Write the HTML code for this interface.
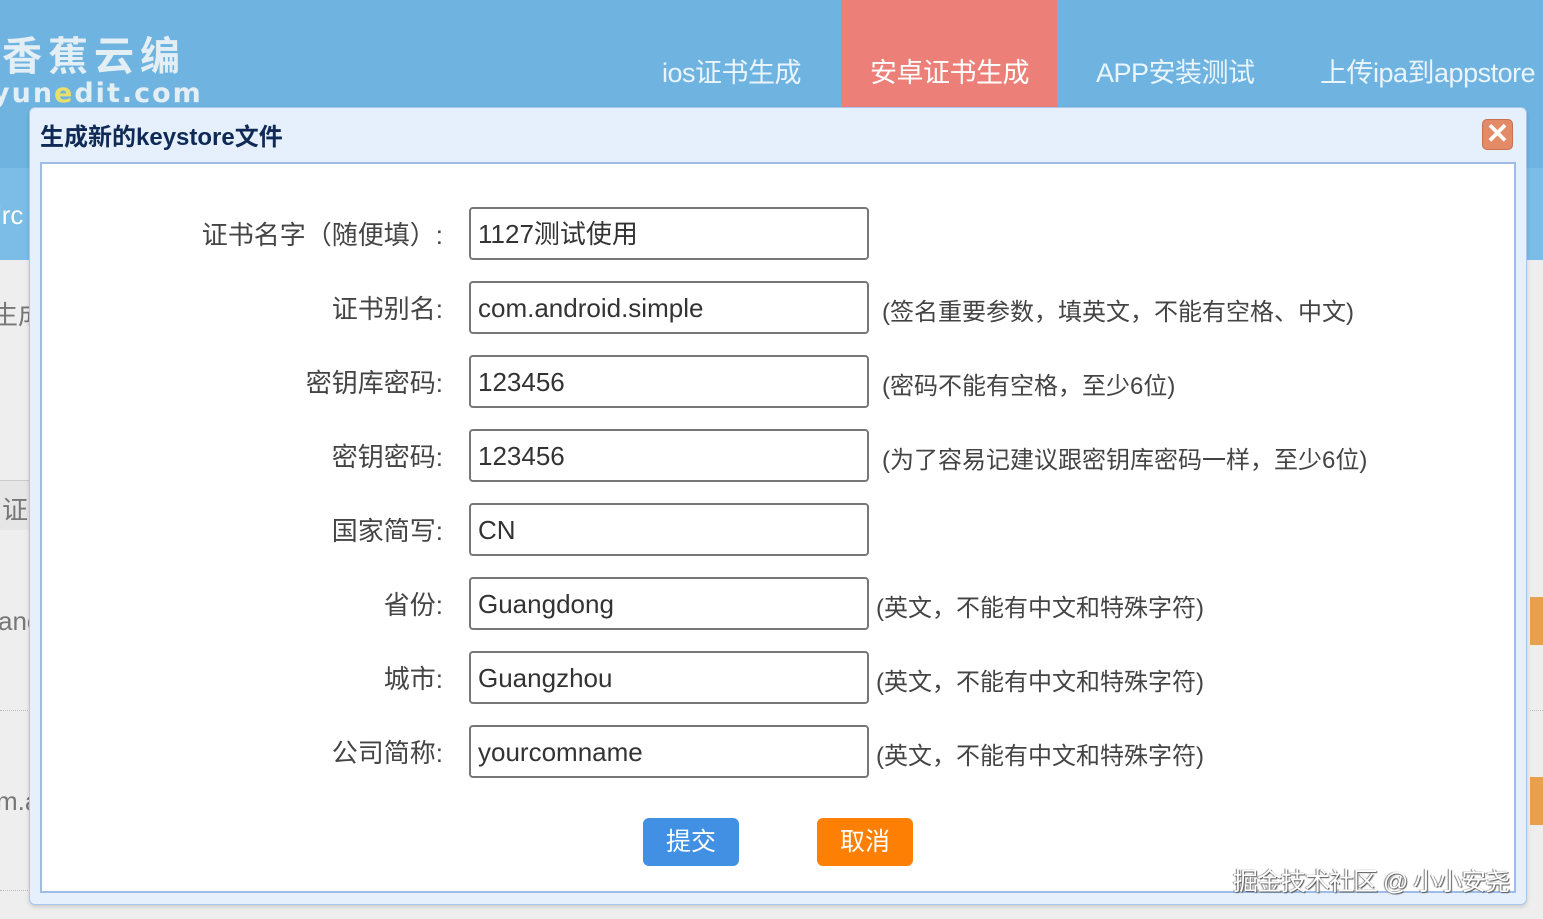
<!DOCTYPE html>
<html><head><meta charset="utf-8"><style>
*{margin:0;padding:0;box-sizing:border-box}
body{width:1543px;height:919px;overflow:hidden;position:relative;background:#eeeeee;font-family:"Liberation Sans","Noto Sans CJK SC",sans-serif;}
.hdr{position:absolute;left:0;top:0;width:1543px;height:168px;background:#6fb4e1}
.bar2{position:absolute;left:0;top:168px;width:1543px;height:92px;background:#7bbde7}
.nav{position:absolute;top:51px;font-size:27px;color:#eaf4fb;letter-spacing:-0.5px}
.act{position:absolute;left:841px;top:0;width:216px;height:107px;background:#ec8078}
.logo1{position:absolute;left:2px;top:24px;font-size:40px;color:#e4eef5;font-weight:bold;letter-spacing:6px}
.logo2{position:absolute;left:-8px;top:78px;font-size:27px;color:#e4eef5;letter-spacing:2px;font-family:"DejaVu Sans",sans-serif;font-weight:bold}
.dlg{position:absolute;left:29px;top:107px;width:1498px;height:798px;background:#e6effc;border:1px solid #a9c7ec;border-radius:6px;box-shadow:0 2px 4px rgba(0,0,0,.15)}
.title{position:absolute;left:40px;top:117px;font-size:24px;font-weight:bold;color:#0f2a55}
.close{position:absolute;left:1482px;top:119px;width:31px;height:31px;background:#e38a66;border-radius:5px;border:1px solid #c9714f;color:#fff;font-size:28px;line-height:28px;text-align:center;font-weight:bold}
.body{position:absolute;left:40px;top:162px;width:1476px;height:731px;background:#fff;border:2px solid #9dbde8}
.lbl{position:absolute;right:1100px;font-size:26px;color:#444;white-space:nowrap}
.inp{position:absolute;left:469px;width:400px;height:53px;border:2px solid #777;border-radius:4px;font-size:26px;color:#333;padding-left:7px;line-height:51px}
.hint{position:absolute;font-size:24px;color:#444;white-space:nowrap}
.btn{position:absolute;top:818px;width:96px;height:48px;border-radius:6px;color:#fff;font-size:25px;text-align:center;line-height:48px}
.wm{position:absolute;left:1233px;top:862px;font-size:25px;color:#fff;text-shadow:1px 1px 1px #555,-1px 0 1px #777;letter-spacing:-1px}
.side{position:absolute;left:0;font-size:26px;color:#777}
</style></head><body>
<div class="hdr"></div>
<div class="bar2"></div>
<div class="act"></div>
<div class="logo1">香蕉云编</div>
<div class="logo2">yun<span style="color:#e8e06a">e</span>dit.com</div>
<div class="nav" style="left:662px">ios证书生成</div>
<div class="nav" style="left:870px;color:#fff">安卓证书生成</div>
<div class="nav" style="left:1096px">APP安装测试</div>
<div class="nav" style="left:1320px">上传ipa到appstore</div>
<div class="side" style="top:200px;color:#fff;left:-4px">lrc</div>
<div class="side" style="top:295px;left:-8px">生成</div>
<div style="position:absolute;left:0;top:480px;width:40px;height:50px;background:#e6e6e6;border-top:1px solid #ccc"></div>
<div class="side" style="top:490px;left:2px">证</div>
<div class="side" style="top:606px;left:-2px">anc</div>
<div class="side" style="top:786px;left:-4px">m.a</div>
<div style="position:absolute;left:0;top:710px;width:30px;border-top:1px dotted #bbb"></div>
<div style="position:absolute;left:0;top:890px;width:30px;border-top:1px dotted #bbb"></div>
<div style="position:absolute;left:1530px;top:597px;width:13px;height:48px;background:#e9a04e"></div>
<div style="position:absolute;left:1530px;top:777px;width:13px;height:48px;background:#e9a04e"></div>
<div style="position:absolute;left:1530px;top:710px;width:13px;border-top:1px dotted #bbb"></div>
<div class="dlg"></div>
<div class="title">生成新的keystore文件</div>
<div class="close">✕</div>
<div class="body"></div>

<div class="lbl" style="top:215px">证书名字（随便填）:</div>
<div class="inp" style="top:207px">1127测试使用</div>
<div class="lbl" style="top:289px">证书别名:</div>
<div class="inp" style="top:281px">com.android.simple</div>
<div class="hint" style="left:882px;top:292px">(签名重要参数，填英文，不能有空格、中文)</div>
<div class="lbl" style="top:363px">密钥库密码:</div>
<div class="inp" style="top:355px">123456</div>
<div class="hint" style="left:882px;top:366px">(密码不能有空格，至少6位)</div>
<div class="lbl" style="top:437px">密钥密码:</div>
<div class="inp" style="top:429px">123456</div>
<div class="hint" style="left:882px;top:440px">(为了容易记建议跟密钥库密码一样，至少6位)</div>
<div class="lbl" style="top:511px">国家简写:</div>
<div class="inp" style="top:503px">CN</div>
<div class="lbl" style="top:585px">省份:</div>
<div class="inp" style="top:577px">Guangdong</div>
<div class="hint" style="left:876px;top:588px">(英文，不能有中文和特殊字符)</div>
<div class="lbl" style="top:659px">城市:</div>
<div class="inp" style="top:651px">Guangzhou</div>
<div class="hint" style="left:876px;top:662px">(英文，不能有中文和特殊字符)</div>
<div class="lbl" style="top:733px">公司简称:</div>
<div class="inp" style="top:725px">yourcomname</div>
<div class="hint" style="left:876px;top:736px">(英文，不能有中文和特殊字符)</div>

<div class="btn" style="left:643px;background:#4190e3">提交</div>
<div class="btn" style="left:817px;background:#fd7f04">取消</div>
<div class="wm">掘金技术社区 @ 小小安尧</div>
</body></html>
